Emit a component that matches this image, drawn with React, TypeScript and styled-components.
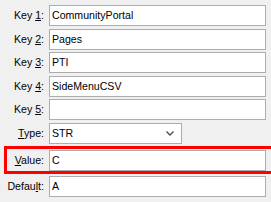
import React from "react";
import styled, { createGlobalStyle } from "styled-components";

const GlobalStyle = createGlobalStyle`
  html, body {
    margin: 0;
    padding: 0;
    background: #f0f0f0;
  }
  body {
    font-family: "Liberation Sans", Arial, sans-serif;
    font-size: 10.6px;
    color: #000;
  }
`;

const Form = styled.div`
  display: flex;
  flex-direction: column;
  gap: 2.6px;
  padding-top: 5px;
  width: 271px;
`;

const Row = styled.div<{ $highlight?: boolean }>`
  display: flex;
  align-items: center;
  margin: ${(p) => (p.$highlight ? "-1px 0 0 4px" : "0")};
  padding: ${(p) => (p.$highlight ? "1px 1px 0 0" : "0")};
  border: ${(p) => (p.$highlight ? "3px solid #ff0000" : "none")};
  width: ${(p) => (p.$highlight ? "263px" : "auto")};
`;

const Label = styled.label<{ $inset?: number }>`
  width: ${(p) => 44 - (p.$inset ?? 0)}px;
  margin-right: 5px;
  text-align: right;
  white-space: nowrap;
  line-height: 21px;
`;

const Key = styled.span`
  text-decoration: underline;
  text-underline-offset: 1px;
`;

const Input = styled.div`
  box-sizing: border-box;
  width: 217px;
  height: 21px;
  border: 1px solid #adadad;
  background: #fff;
  padding: 0 2px;
  line-height: 19px;
  white-space: nowrap;
  overflow: hidden;
`;

const Select = styled.div`
  box-sizing: border-box;
  width: 133px;
  height: 21px;
  border: 1px solid #adadad;
  background: #fff;
  padding: 0 2px;
  line-height: 19px;
  display: flex;
  align-items: center;
  justify-content: space-between;
`;

const Chevron = () => (
  <svg width="8" height="5" viewBox="0 0 8 5" style={{ marginRight: 5 }}>
    <path d="M0.5 0.5 L4 4 L7.5 0.5" fill="none" stroke="#4d4d4d" strokeWidth="1.4" />
  </svg>
);

export default function App() {
  return (
    <>
      <GlobalStyle />
      <Form>
        <Row>
          <Label>Key <Key>1</Key>:</Label>
          <Input>CommunityPortal</Input>
        </Row>
        <Row>
          <Label>Key <Key>2</Key>:</Label>
          <Input>Pages</Input>
        </Row>
        <Row>
          <Label>Key <Key>3</Key>:</Label>
          <Input>PTI</Input>
        </Row>
        <Row>
          <Label>Key <Key>4</Key>:</Label>
          <Input>SideMenuCSV</Input>
        </Row>
        <Row>
          <Label>Key <Key>5</Key>:</Label>
          <Input></Input>
        </Row>
        <Row>
          <Label><Key>T</Key>ype:</Label>
          <Select>
            <span>STR</span>
            <Chevron />
          </Select>
        </Row>
        <Row $highlight>
          <Label $inset={7}><Key>V</Key>alue:</Label>
          <Input>C</Input>
        </Row>
        <Row>
          <Label>Defau<Key>l</Key>t:</Label>
          <Input>A</Input>
        </Row>
      </Form>
    </>
  );
}
